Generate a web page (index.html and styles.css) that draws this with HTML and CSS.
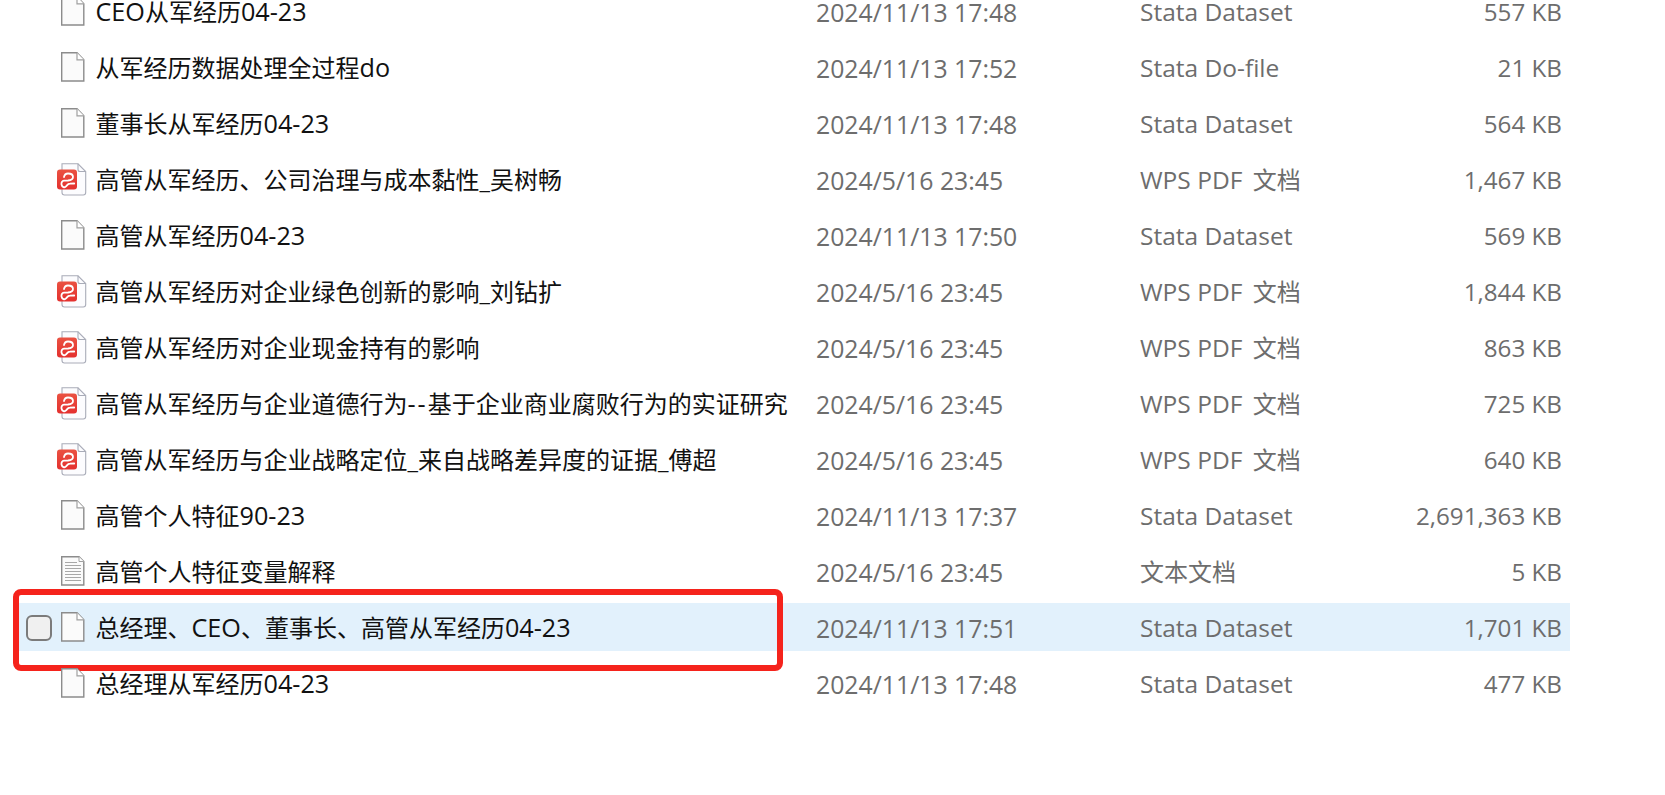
FILE: index.html
```html
<!DOCTYPE html>
<html lang="zh-CN">
<head>
    <meta charset="UTF-8">
    <meta name="viewport" content="width=device-width, initial-scale=1.0">
    <title>文件列表</title>
    <link rel="stylesheet" href="styles.css">
</head>
<body>
    <svg class="icon-defs" width="0" height="0">
        <defs>
            <linearGradient id="pdf-red" x1="0" y1="0" x2="0" y2="1">
                <stop offset="0" stop-color="#ea5242"/>
                <stop offset="1" stop-color="#e4302e"/>
            </linearGradient>
        </defs>
        <symbol id="icon-blank" viewBox="0 0 24 30">
            <path d="M.7 .7H16L22.800 7.800V29H.7Z" fill="#fbfbfb" stroke="#8c8c8c" stroke-width="1.4"/>
            <path d="M16 .7V7.800H22.800" fill="#fff" stroke="#a0a0a0" stroke-width="1.200"/>
        </symbol>
        <symbol id="icon-text" viewBox="0 0 24 30">
            <path d="M.7 .7H18L22.800 5.500V29H.7Z" fill="#fbfbfb" stroke="#8c8c8c" stroke-width="1.4"/>
            <path d="M18 .7V5.500H22.800" fill="#fff" stroke="#a0a0a0" stroke-width="1"/>
            <path d="M4 6.500H16M4 9.500H20M4 12.500H20M4 15.500H20M4 18.500H20M4 21.500H20M4 24.500H20" stroke="#a8a8a8" stroke-width="1.200"/>
        </symbol>
        <symbol id="icon-pdf" viewBox="0 0 31 33">
            <path d="M6 .8H22L29.700 8.500V29.500A2.500 2.500 0 0 1 27.200 32H8.500A2.500 2.500 0 0 1 6 29.500Z" fill="#fcfcfe" stroke="#a9acb8" stroke-width="1.100"/>
            <path d="M22 .8V6.500A2 2 0 0 0 24 8.500H29.700" fill="none" stroke="#a9acb8" stroke-width="1.100"/>
            <rect x="1" y="6.500" width="20" height="20" rx="3" fill="url(#pdf-red)"/>
            <path d="M8 14C8.500 11.500 10 10.500 12 10.500C15 10.500 17 11.800 17 14C17 16.200 14.500 17.300 12 17.500L8 17.700C6 18 5.200 19.800 5.500 21.500C6 24.200 8.700 25 10 23.500C11.300 22 11.800 20.700 14 20.700L18.200 20.500" fill="none" stroke="#fff" stroke-width="1.800" stroke-linecap="round"/>
        </symbol>
    </svg>

    <main class="file-list">
        <div class="file-row">
            <span class="file-name"><svg class="icon"><use href="#icon-blank"/></svg><span><span class="lat">CEO</span>从军经历<span class="lat">04-23</span></span></span>
            <span class="file-date">2024/11/13 17:48</span>
            <span class="file-type">Stata Dataset</span>
            <span class="file-size">557 KB</span>
        </div>
        <div class="file-row">
            <span class="file-name"><svg class="icon"><use href="#icon-blank"/></svg><span>从军经历数据处理全过程<span class="lat">do</span></span></span>
            <span class="file-date">2024/11/13 17:52</span>
            <span class="file-type">Stata Do-file</span>
            <span class="file-size">21 KB</span>
        </div>
        <div class="file-row">
            <span class="file-name"><svg class="icon"><use href="#icon-blank"/></svg><span>董事长从军经历<span class="lat">04-23</span></span></span>
            <span class="file-date">2024/11/13 17:48</span>
            <span class="file-type">Stata Dataset</span>
            <span class="file-size">564 KB</span>
        </div>
        <div class="file-row">
            <span class="file-name"><svg class="icon icon-pdf"><use href="#icon-pdf"/></svg><span>高管从军经历、公司治理与成本黏性_吴树畅</span></span>
            <span class="file-date">2024/5/16 23:45</span>
            <span class="file-type">WPS PDF <span class="cjk wps-word">文档</span></span>
            <span class="file-size">1,467 KB</span>
        </div>
        <div class="file-row">
            <span class="file-name"><svg class="icon"><use href="#icon-blank"/></svg><span>高管从军经历<span class="lat">04-23</span></span></span>
            <span class="file-date">2024/11/13 17:50</span>
            <span class="file-type">Stata Dataset</span>
            <span class="file-size">569 KB</span>
        </div>
        <div class="file-row">
            <span class="file-name"><svg class="icon icon-pdf"><use href="#icon-pdf"/></svg><span>高管从军经历对企业绿色创新的影响_刘钻扩</span></span>
            <span class="file-date">2024/5/16 23:45</span>
            <span class="file-type">WPS PDF <span class="cjk wps-word">文档</span></span>
            <span class="file-size">1,844 KB</span>
        </div>
        <div class="file-row">
            <span class="file-name"><svg class="icon icon-pdf"><use href="#icon-pdf"/></svg><span>高管从军经历对企业现金持有的影响</span></span>
            <span class="file-date">2024/5/16 23:45</span>
            <span class="file-type">WPS PDF <span class="cjk wps-word">文档</span></span>
            <span class="file-size">863 KB</span>
        </div>
        <div class="file-row">
            <span class="file-name"><svg class="icon icon-pdf"><use href="#icon-pdf"/></svg><span>高管从军经历与企业道德行为<span class="dash">--</span>基于企业商业腐败行为的实证研究</span></span>
            <span class="file-date">2024/5/16 23:45</span>
            <span class="file-type">WPS PDF <span class="cjk wps-word">文档</span></span>
            <span class="file-size">725 KB</span>
        </div>
        <div class="file-row">
            <span class="file-name"><svg class="icon icon-pdf"><use href="#icon-pdf"/></svg><span>高管从军经历与企业战略定位_来自战略差异度的证据_傅超</span></span>
            <span class="file-date">2024/5/16 23:45</span>
            <span class="file-type">WPS PDF <span class="cjk wps-word">文档</span></span>
            <span class="file-size">640 KB</span>
        </div>
        <div class="file-row">
            <span class="file-name"><svg class="icon"><use href="#icon-blank"/></svg><span>高管个人特征<span class="lat">90-23</span></span></span>
            <span class="file-date">2024/11/13 17:37</span>
            <span class="file-type">Stata Dataset</span>
            <span class="file-size">2,691,363 KB</span>
        </div>
        <div class="file-row">
            <span class="file-name"><svg class="icon"><use href="#icon-text"/></svg><span>高管个人特征变量解释</span></span>
            <span class="file-date">2024/5/16 23:45</span>
            <span class="file-type"><span class="cjk">文本文档</span></span>
            <span class="file-size">5 KB</span>
        </div>
        <div class="file-row selected">
            <span class="file-check"></span>
            <span class="file-name"><svg class="icon"><use href="#icon-blank"/></svg><span>总经理、<span class="lat">CEO</span>、董事长、高管从军经历<span class="lat">04-23</span></span></span>
            <span class="file-date">2024/11/13 17:51</span>
            <span class="file-type">Stata Dataset</span>
            <span class="file-size">1,701 KB</span>
            <span class="red-box"></span>
        </div>
        <div class="file-row">
            <span class="file-name"><svg class="icon"><use href="#icon-blank"/></svg><span>总经理从军经历<span class="lat">04-23</span></span></span>
            <span class="file-date">2024/11/13 17:48</span>
            <span class="file-type">Stata Dataset</span>
            <span class="file-size">477 KB</span>
        </div>
    </main>
</body>
</html>
```
FILE: styles.css
```css
* {
    margin: 0;
    padding: 0;
    box-sizing: border-box;
}

html, body {
    height: 100%;
    overflow: hidden;
}

body {
    background-color: #fff;
    font-family: "Open Sans", "Noto Sans CJK SC", sans-serif;
    font-size: 24px;
    color: #6d6d6d;
}

.icon-defs {
    position: absolute;
}

.file-list {
    display: flex;
    flex-direction: column;
    gap: 8px;
    width: 1570px;
    margin-top: -13px;
    padding-left: 16px;
}

.file-row {
    position: relative;
    display: grid;
    grid-template-columns: 800px 324px 1fr auto;
    align-items: center;
    height: 48px;
    line-height: 46px;
    padding-top: 1px;
    padding-right: 8px;
    white-space: nowrap;
}

.file-row.selected {
    background-color: #e2f1fc;
}

.file-date {
    font-size: 24.8px;
}

.file-type {
    font-size: 24.5px;
}

.file-size {
    font-size: 24.2px;
}

.cjk {
    font-size: 24px;
}

.wps-word {
    margin-left: 4px;
}

.file-name {
    display: flex;
    align-items: center;
    padding-left: 45px;
    color: #111;
}

.lat {
    font-size: 25.2px;
}

.dash {
    font-size: 25.2px;
    letter-spacing: 2px;
}

.icon {
    width: 24px;
    height: 30px;
    margin-top: -1px;
    margin-right: 10.5px;
    flex: none;
}

.icon-pdf {
    width: 31px;
    height: 33px;
    margin-left: -5px;
    margin-right: 8.5px;
}

.file-check {
    position: absolute;
    left: 10px;
    top: 12px;
    width: 26px;
    height: 26px;
    background-color: #f0f0f0;
    border: 2px solid #7b7b7b;
    border-radius: 6px;
}

.red-box {
    position: absolute;
    left: -3px;
    top: -14px;
    width: 770px;
    height: 82px;
    border: 6px solid #f5231c;
    border-radius: 8px;
}
```
